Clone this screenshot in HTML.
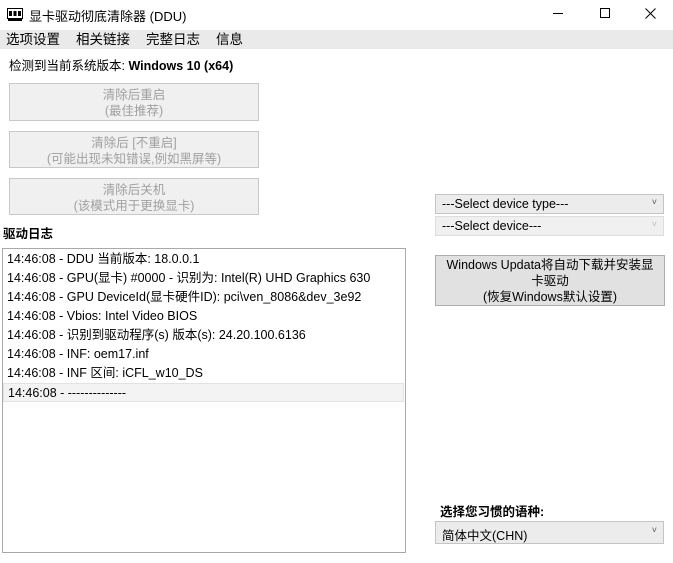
<!DOCTYPE html>
<html><head><meta charset="utf-8"><style>
*{margin:0;padding:0;box-sizing:border-box}
body{width:673px;height:563px;background:#fff;font-family:"Liberation Sans","Noto Sans CJK SC",sans-serif;font-size:12.5px;color:#000;position:relative;overflow:hidden}
.a{position:absolute}
.btn{position:absolute;background:#f0f0f0;border:1px solid #c8c8c8;color:#a0a0a0;text-align:center;line-height:16px;padding-top:3px;font-size:12.5px}
.sel{position:absolute;left:435px;width:229px;height:20px;background:#ececec;border:1px solid #c4c4c4;padding:2px 0 0 6px;font-size:12.5px}
.sel span{position:absolute;right:6px;top:2px;font-size:9px;color:#555}
.log div{height:19px;line-height:19px;padding-left:4px;white-space:nowrap}
.m{position:absolute;top:30px;font-size:13.5px;line-height:19px}
</style></head><body>
<svg class="a" style="left:7px;top:8px" width="16" height="13"><rect x="0.5" y="0.5" width="15" height="10" fill="#fff" stroke="#000"/><rect x="2" y="3" width="3" height="5" fill="#000"/><rect x="6.5" y="3" width="3" height="5" fill="#000"/><rect x="11" y="3" width="3" height="5" fill="#000"/><rect x="1" y="11" width="14" height="2" fill="#000"/></svg>
<div class="a" style="left:29px;top:6px;font-size:13px">显卡驱动彻底清除器 (DDU)</div>
<div class="a" style="left:553px;top:13px;width:10px;height:1px;background:#000"></div>
<div class="a" style="left:600px;top:8px;width:10px;height:10px;border:1px solid #000"></div>
<svg class="a" style="left:645px;top:8px" width="11" height="11"><path d="M0.5 0.5L10.5 10.5M10.5 0.5L0.5 10.5" stroke="#000" stroke-width="1"/></svg>
<div class="a" style="left:0;top:30px;width:673px;height:19px;background:#eaeaea"></div>
<div class="m" style="left:6px">选项设置</div>
<div class="m" style="left:76px">相关链接</div>
<div class="m" style="left:146px">完整日志</div>
<div class="m" style="left:216px">信息</div>
<div class="a" style="left:9px;top:55px;font-size:12.5px">检测到当前系统版本: <b>Windows 10 (x64)</b></div>
<div class="btn" style="left:9px;top:83px;width:250px;height:38px">清除后重启<br>(最佳推荐)</div>
<div class="btn" style="left:9px;top:131px;width:250px;height:37px">清除后 [不重启]<br>(可能出现未知错误,例如黑屏等)</div>
<div class="btn" style="left:9px;top:178px;width:250px;height:37px">清除后关机<br>(该模式用于更换显卡)</div>
<div class="a" style="left:3px;top:223px;font-weight:bold;font-size:12.5px">驱动日志</div>
<div class="a log" style="left:2px;top:248px;width:404px;height:305px;border:1px solid #aaa;padding-top:1px">
<div>14:46:08 - DDU 当前版本: 18.0.0.1</div>
<div>14:46:08 - GPU(显卡) #0000 - 识别为: Intel(R) UHD Graphics 630</div>
<div>14:46:08 - GPU DeviceId(显卡硬件ID): pci\ven_8086&amp;dev_3e92</div>
<div>14:46:08 - Vbios: Intel Video BIOS</div>
<div>14:46:08 - 识别到驱动程序(s) 版本(s): 24.20.100.6136</div>
<div>14:46:08 - INF: oem17.inf</div>
<div>14:46:08 - INF 区间: iCFL_w10_DS</div>
<div style="background:#f3f3f3;border:1px solid #e2e2e2;margin-right:1px">14:46:08 - --------------</div>
</div>
<div class="sel" style="top:194px">---Select device type---<span>˅</span></div>
<div class="sel" style="top:216px;background:#f0f0f0;border-color:#ddd">---Select device---<span style="color:#bbb">˅</span></div>
<div class="a" style="left:435px;top:255px;width:230px;height:51px;background:#e1e1e1;border:1px solid #adadad;text-align:center;line-height:16px;padding-top:1px;font-size:12.5px">Windows Updata将自动下载并安装显<br>卡驱动<br>(恢复Windows默认设置)</div>
<div class="a" style="left:440px;top:501px;font-weight:bold;font-size:12.5px">选择您习惯的语种:</div>
<div class="sel" style="top:521px;height:23px;padding-top:3px">简体中文(CHN)<span style="top:3px">˅</span></div>
</body></html>
